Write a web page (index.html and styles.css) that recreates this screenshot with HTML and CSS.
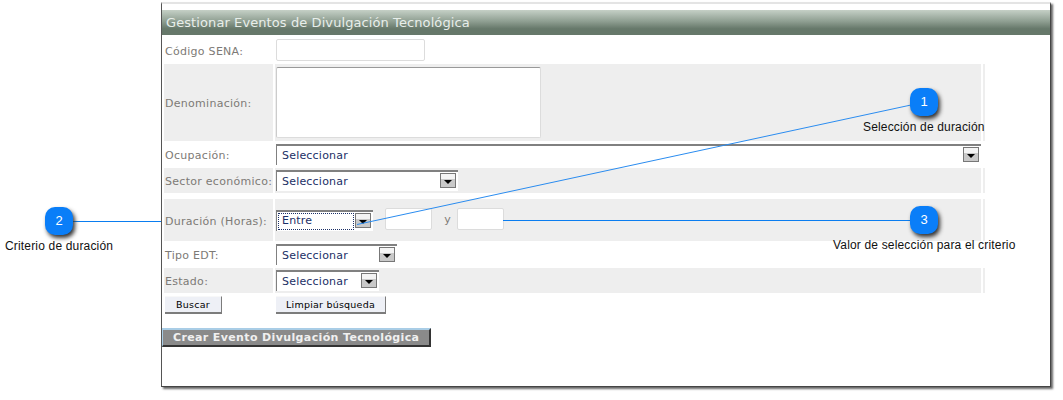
FILE: index.html
```html
<!DOCTYPE html>
<html lang="es">
<head>
<meta charset="utf-8">
<title>Gestionar Eventos de Divulgación Tecnológica</title>
<link rel="stylesheet" href="styles.css">
</head>
<body>
<main class="window">
  <h1 class="title">Gestionar Eventos de Divulgación Tecnológica</h1>
  <div class="row h-codigo">
    <div class="label">Código SENA:</div>
    <div class="field"><span class="input w-codigo"></span></div>
  </div>
  <div class="row shaded h-denom">
    <div class="label">Denominación:</div>
    <div class="field"><span class="input w-area"></span></div>
    <div class="strip"></div>
  </div>
  <div class="row h-ocup">
    <div class="label">Ocupación:</div>
    <div class="field"><span class="select w-ocup"><span class="sel-text">Seleccionar</span><span class="arrow"></span></span></div>
  </div>
  <div class="row shaded h-sector">
    <div class="label">Sector económico:</div>
    <div class="field"><span class="select w-sector"><span class="sel-text">Seleccionar</span><span class="arrow"></span></span></div>
    <div class="strip"></div>
  </div>
  <div class="row shaded h-dur">
    <div class="label">Duración (Horas):</div>
    <div class="field dur-field">
      <span class="select w-dur"><span class="sel-text focused">Entre</span><span class="arrow"></span></span>
      <span class="input w-num"></span>
      <span class="y">y</span>
      <span class="input w-num"></span>
    </div>
    <div class="strip"></div>
  </div>
  <div class="row h-tipo">
    <div class="label">Tipo EDT:</div>
    <div class="field"><span class="select w-tipo"><span class="sel-text">Seleccionar</span><span class="arrow"></span></span></div>
  </div>
  <div class="row shaded h-estado">
    <div class="label">Estado:</div>
    <div class="field"><span class="select w-estado"><span class="sel-text">Seleccionar</span><span class="arrow"></span></span></div>
    <div class="strip"></div>
  </div>
  <div class="buttons">
    <button class="btn btn-buscar" type="button">Buscar</button>
    <button class="btn btn-limpiar" type="button">Limpiar búsqueda</button>
  </div>
  <button class="crear" type="button">Crear Evento Divulgación Tecnológica</button>
</main>

<svg class="lines" width="1063" height="400" viewBox="0 0 1063 400" aria-hidden="true">
  <line x1="357" y1="224.5" x2="911" y2="105" stroke="#2a8cf0" stroke-width="1"/>
  <line x1="73" y1="221.5" x2="161" y2="221.5" stroke="#0a7df0" stroke-width="1"/>
  <line x1="503" y1="220.5" x2="911" y2="220.5" stroke="#0a7df0" stroke-width="1"/>
</svg>
<div class="badge b1">1</div>
<div class="badge b2">2</div>
<div class="badge b3">3</div>
<div class="note n1">Selección de duración</div>
<div class="note n2">Criterio de duración</div>
<div class="note n3">Valor de selección para el criterio</div>
</body>
</html>
```
FILE: styles.css
```css
html, body { margin: 0; padding: 0; background: #fff; }
body { width: 1063px; height: 400px; overflow: hidden; position: relative; font-family: "DejaVu Sans", Verdana, sans-serif; }

.window {
  box-sizing: border-box;
  width: 890px;
  height: 385px;
  margin: 2px 0 0 161px;
  padding: 6px 0 0 1px;
  border-top: 2px solid #e4e4e4;
  border-left: 1px solid #555;
  border-right: 1px solid #444;
  border-bottom: 1px solid #444;
  box-shadow: 2px 2px 2px #666;
  background: #fff;
}
.title {
  margin: 0 0 0 -1px;
  height: 25px;
  padding-left: 4px;
  font-size: 13px;
  line-height: 25px;
  font-weight: normal;
  letter-spacing: 0.09px;
  color: #e8eeea;
  background: linear-gradient(#c5d0c6 0, #8f9f92 45%, #66786a 75%, #66786a 100%);
}

.row { display: flex; margin-left: 1px; gap: 2px; width: 821px; }
.shaded .label, .shaded .field, .shaded .strip { background: #eeeeee; }
.label {
  box-sizing: border-box;
  flex: 0 0 109px;
  padding: 2px 0 0 1px;
  display: flex;
  align-items: center;
  font-size: 11px;
  letter-spacing: 0.28px;
  color: #7d7a76;
  white-space: nowrap;
}
.field { flex: 0 0 706px; box-sizing: border-box; display: flex; align-items: center; padding-left: 1px; }
.strip { flex: 0 0 2px; }

.h-codigo { height: 29px; }
.h-codigo .label { padding-top: 4px; }
.h-denom { height: 77px; }
.h-ocup { height: 27px; }
.h-sector { height: 25px; }
.h-dur { height: 42px; margin-top: 6px; }
.h-tipo { height: 27px; }
.h-estado { height: 25px; }

.input {
  display: block;
  box-sizing: border-box;
  background: #fff;
  border: 1px solid #dcdcdc;
  border-radius: 2px;
}
.w-codigo { width: 149px; height: 22px; }
.w-area { width: 265px; height: 71px; border-top-color: #999; border-left-color: #ccc; }
.w-num { width: 47px; height: 22px; }

.select {
  box-sizing: border-box;
  display: flex;
  align-items: center;
  justify-content: space-between;
  height: 21px;
  padding: 0 2px 0 0;
  background: #fff;
  border-top: 2px solid #808080;
  border-left: 1px solid #808080;
  font-size: 11px;
  letter-spacing: 0.2px;
  color: #1b2f66;
}
.sel-text { padding-left: 5px; line-height: 15px; }
.focused { box-sizing: border-box; flex: 1; margin: 0 1px 0 1px; padding-left: 4px; outline: 1px dotted #1b2f66; outline-offset: -1px; height: 17px; line-height: 16px; }
.arrow {
  box-sizing: border-box;
  flex: 0 0 16px;
  width: 16px;
  height: 15px;
  margin-top: -2px;
  position: relative;
  border: 1px solid #777;
  background: linear-gradient(#f4f4f4 0, #f4f4f4 40%, #c9c9c9 40%, #c9c9c9 100%);
}
.arrow::after {
  content: "";
  position: absolute;
  left: 3px;
  top: 6px;
  border-left: 4px solid transparent;
  border-right: 4px solid transparent;
  border-top: 4px solid #000;
}
.w-ocup { width: 705px; }
.w-sector { width: 182px; }
.w-dur { width: 97px; }
.w-tipo { width: 121px; }
.w-estado { width: 103px; }

.dur-field { align-items: center; }
.dur-field .select { margin-right: 12px; margin-top: 1px; }
.dur-field .input { margin-top: -2px; }
.y { box-sizing: border-box; width: 25px; padding-left: 6px; text-align: center; font-size: 11px; color: #7d7a76; margin-top: -1px; }

.buttons { display: flex; margin: 3px 0 0 2px; }
.btn {
  box-sizing: border-box;
  height: 18px;
  padding: 0;
  font-family: "DejaVu Sans", Verdana, sans-serif;
  font-size: 9.5px;
  letter-spacing: 0.22px;
  color: #000;
  background: #eef0f6;
  border: 0;
  border-right: 1px solid #7c7c7c;
  border-bottom: 2px solid #7c7c7c;
  border-top: 1px solid #f8f8f8;
}
.btn-buscar { width: 57px; margin-right: 54px; }
.btn-limpiar { width: 110px; }

.crear {
  display: block;
  box-sizing: border-box;
  width: 269px;
  height: 19px;
  margin: 14px 0 0 -1px;
  padding: 0 0 0 10px;
  text-align: left;
  font-family: "DejaVu Sans", Verdana, sans-serif;
  font-size: 11px;
  font-weight: bold;
  letter-spacing: 0.37px;
  color: #f0f0f0;
  background: #8a8a8a;
  border: 0;
  border-top: 2px solid #a9cde6;
  border-left: 1px solid #a9cde6;
  border-right: 2px solid #333;
  border-bottom: 2px solid #333;
}

.lines { position: absolute; left: 0; top: 0; pointer-events: none; }

.badge {
  position: absolute;
  width: 28px;
  height: 28px;
  border-radius: 10px;
  background: #0a7ef8;
  color: #fff;
  font-family: "Liberation Sans", Arial, sans-serif;
  font-size: 13px;
  line-height: 28px;
  text-align: center;
  box-shadow: 2px 3px 4px #333;
}
.b1 { left: 910px; top: 88px; }
.b2 { left: 45px; top: 207px; }
.b3 { left: 910px; top: 206px; }

.note {
  position: absolute;
  font-family: "Liberation Sans", Arial, sans-serif;
  font-size: 12px;
  line-height: 14px;
  letter-spacing: 0.17px;
  color: #111;
  white-space: nowrap;
}
.n1 { left: 863px; top: 120px; }
.n2 { left: 5px; top: 239px; }
.n3 { left: 833px; top: 238px; }
```
